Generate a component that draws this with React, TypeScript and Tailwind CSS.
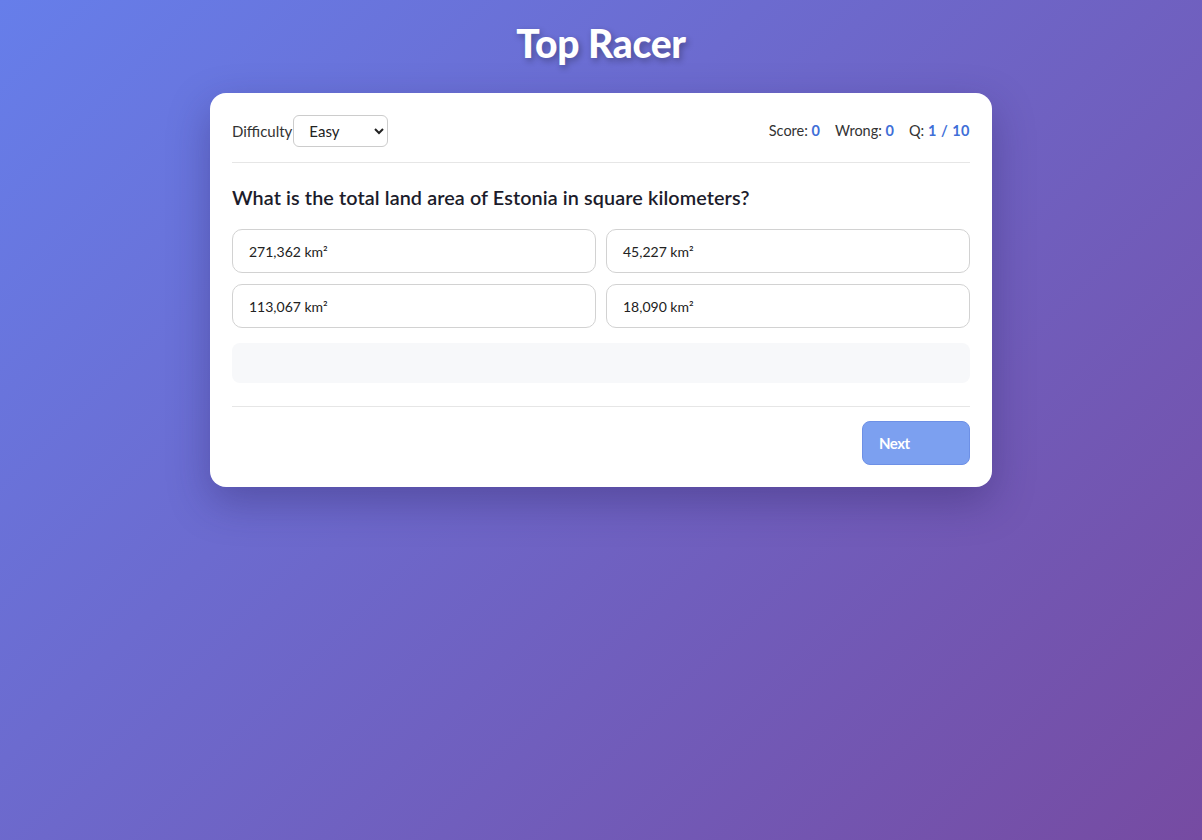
import { useState } from "react";

const OPTIONS = ["271,362 km²", "45,227 km²", "113,067 km²", "18,090 km²"];

export default function App() {
  const [difficulty, setDifficulty] = useState("easy");

  return (
    <div
      className="min-h-[840px] w-full bg-[linear-gradient(135deg,#667eea_0%,#764ba2_100%)] pt-[21px] text-[#222]"
      style={{ fontFamily: "Lato, 'Open Sans', sans-serif" }}
    >
      <h1
        className="text-center text-[39px] leading-[44px] font-black tracking-[-0.3px] text-white [text-shadow:2px_3px_6px_rgba(0,0,0,0.3)]"
        style={{ fontFamily: "Lato, 'Noto Sans', sans-serif" }}
      >
        Top Racer
      </h1>

      <div className="mx-auto mt-[28px] w-[782px] rounded-2xl bg-white p-[22px] shadow-[0_15px_40px_rgba(40,30,90,0.35)]">
        <div className="flex items-center justify-between border-b border-[#e6e6e6] pb-[15px]">
          <label className="flex items-center gap-[1px] text-[15px] text-[#333]">
            Difficulty
            <select
              value={difficulty}
              onChange={(e) => setDifficulty(e.target.value)}
              className="h-[32px] w-[95px] rounded-md border border-[#ccc] bg-white px-[11px] text-[15px] text-[#222]"
            >
              <option value="easy">Easy</option>
              <option value="medium">Medium</option>
              <option value="hard">Hard</option>
            </select>
          </label>
          <div className="flex items-center gap-[15px] text-[14.5px] text-[#333]">
            <span>
              Score: <b className="font-bold text-[#3f6fd8]">0</b>
            </span>
            <span>
              Wrong: <b className="font-bold text-[#3f6fd8]">0</b>
            </span>
            <span>
              Q: <b className="font-bold text-[#3f6fd8] tracking-[0.5px]">1 / 10</b>
            </span>
          </div>
        </div>

        <h2 className="mt-[20px] text-[19.8px] leading-[28px] font-semibold tracking-[0.1px] text-[#1c1c2b]">
          What is the total land area of Estonia in square kilometers?
        </h2>

        <div className="mt-[18px] grid grid-cols-2 gap-[11px_10px]">
          {OPTIONS.map((o) => (
            <button
              key={o}
              className="h-[44px] rounded-[10px] border border-[#d2d2d2] bg-white pl-[16px] text-left text-[14px] text-[#222]"
            >
              {o}
            </button>
          ))}
        </div>

        <div className="mt-[15px] h-[40px] rounded-lg bg-[#f7f8fa]" />

        <div className="mt-[23px] flex justify-end border-t border-[#e6e6e6] pt-[14px]">
          <button className="h-[44px] w-[108px] rounded-lg border border-[#6d90e6] bg-[#7ca0f0] pl-[16px] text-left text-[15px] font-bold tracking-[-0.5px] text-white">
            Next
          </button>
        </div>
      </div>
    </div>
  );
}
